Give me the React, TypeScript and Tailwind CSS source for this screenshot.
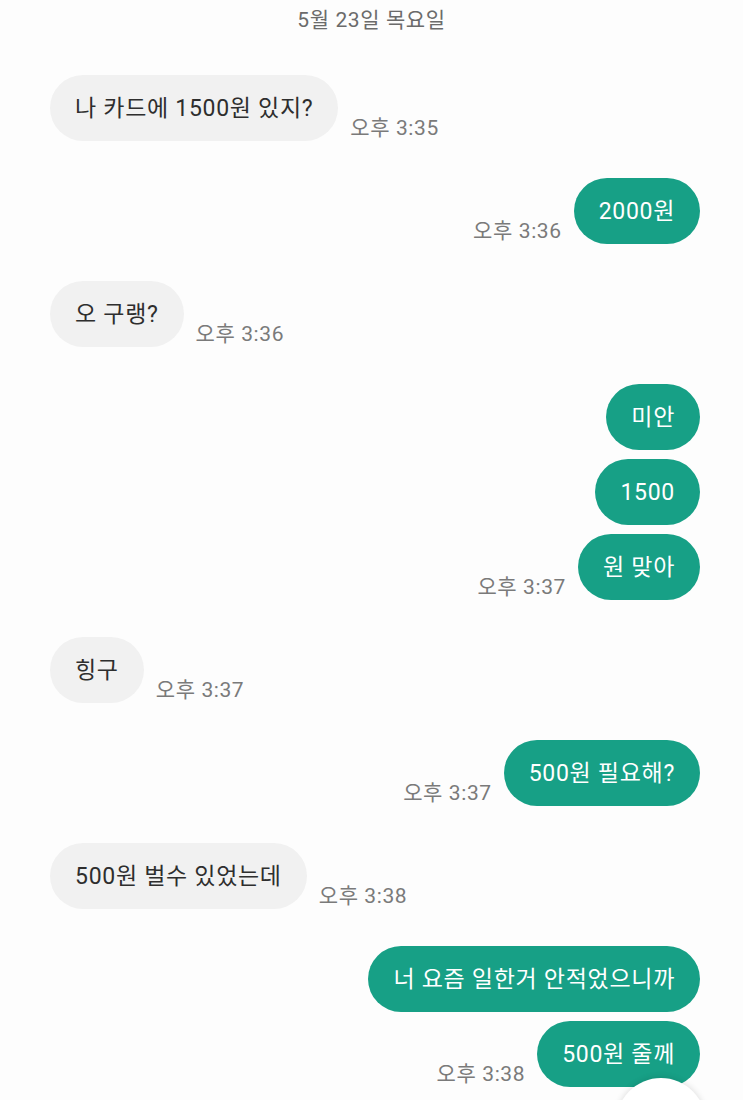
type Msg = { side: "in" | "out"; texts: string[]; time: string };

const messages: Msg[] = [
  { side: "in", texts: ["나 카드에 1500원 있지?"], time: "오후 3:35" },
  { side: "out", texts: ["2000원"], time: "오후 3:36" },
  { side: "in", texts: ["오 구랭?"], time: "오후 3:36" },
  { side: "out", texts: ["미안", "1500", "원 맞아"], time: "오후 3:37" },
  { side: "in", texts: ["힝구"], time: "오후 3:37" },
  { side: "out", texts: ["500원 필요해?"], time: "오후 3:37" },
  { side: "in", texts: ["500원 벌수 있었는데"], time: "오후 3:38" },
  { side: "out", texts: ["너 요즘 일한거 안적었으니까", "500원 줄께"], time: "오후 3:38" },
];

function Bubble({ text, out }: { text: string; out: boolean }) {
  return (
    <div
      className={
        "flex h-[66px] items-center whitespace-nowrap rounded-full px-[25px] text-[23px] leading-none tracking-[0.7px] " +
        (out ? "bg-[#17a086] text-white" : "bg-[#f1f1f1] text-[#2e2e2e]")
      }
    >
      {text}
    </div>
  );
}

function Time({ value }: { value: string }) {
  return (
    <div className="mb-[1px] whitespace-nowrap text-[21px] leading-6 tracking-[0.6px] text-[#7a7a7a]">{value}</div>
  );
}

function Group({ msg }: { msg: Msg }) {
  const out = msg.side === "out";
  const last = msg.texts.length - 1;
  return (
    <div className={"flex flex-col gap-[9px] " + (out ? "items-end pr-[43px]" : "items-start pl-[50px]")}>
      {msg.texts.map((t, i) =>
        i === last ? (
          <div key={i} className={"flex items-end gap-[12px] " + (out ? "flex-row-reverse" : "")}>
            <Bubble text={t} out={out} />
            <Time value={msg.time} />
          </div>
        ) : (
          <Bubble key={i} text={t} out={out} />
        )
      )}
    </div>
  );
}

export default function App() {
  return (
    <div
      className="relative h-[1100px] w-[743px] overflow-hidden bg-[#fdfdfd]"
      style={{ fontFamily: 'Roboto, "Noto Sans CJK KR", sans-serif' }}
    >
      <div className="pt-[6px] text-center text-[21px] leading-7 tracking-[0.6px] text-[#6b6b6b]">5월 23일 목요일</div>
      <div className="mt-[41px] flex flex-col gap-[37px]">
        {messages.map((m, i) => (
          <Group key={i} msg={m} />
        ))}
      </div>
      <div className="absolute left-[616px] top-[1078px] h-[90px] w-[90px] rounded-full bg-white shadow-[0_-1px_6px_rgba(0,0,0,0.12)]" />
    </div>
  );
}
